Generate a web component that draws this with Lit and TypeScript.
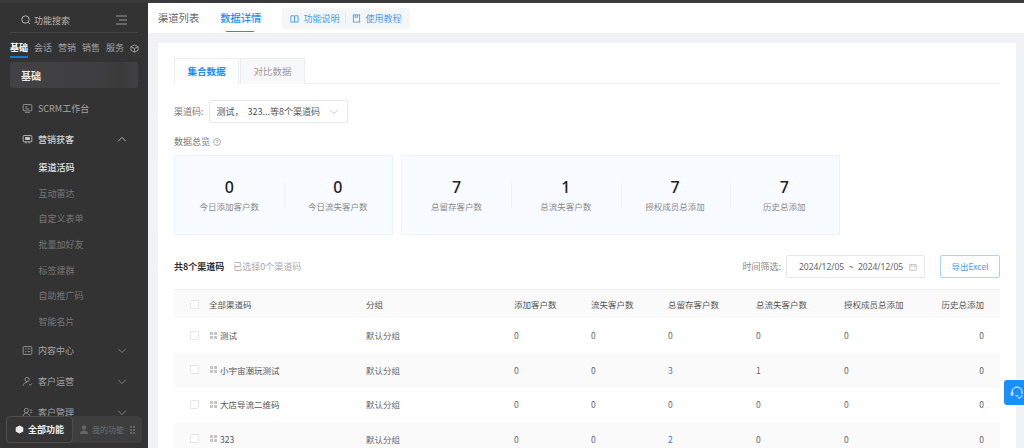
import { LitElement, css, html, svg } from "lit";
import { customElement } from "lit/decorators.js";

const icons: Record<string, unknown> = {
  monitor: svg`<rect x="1.5" y="2" width="11" height="8" rx="1"/><path d="M4 12h6M4 5h3M4 7.5h5"/>`,
  chat: svg`<rect x="1.5" y="2" width="11" height="8" rx="1"/><rect x="4" y="4" width="6" height="3.500" fill="currentColor" stroke="none"/><path d="M5 10v2M9 10v2"/>`,
  list: svg`<rect x="1.5" y="2" width="11" height="10" rx="1"/><path d="M4 5h1.5M4 8.5h1.5M7 5h3.5M7 8.5h3.5"/>`,
  user: svg`<circle cx="6.5" cy="4.5" r="2.7"/><path d="M1.5 12.5c.4-3 2.4-4.6 5-4.6M9 10.5l1.5 1.5 2-2.5"/>`,
  users: svg`<circle cx="5.5" cy="4.5" r="2.7"/><path d="M1 12.5c.4-3 2.2-4.6 4.5-4.6s4 1.6 4.5 4.6M10 4h3M10.500 7h2.500"/>`,
};

const menuIcon = (name: string) => html`<svg class="mi" viewBox="0 0 14 14">${icons[name]}</svg>`;
const chevron = (up = false) =>
  html`<svg class="chev" viewBox="0 0 12 8"><path d=${up ? "M1.500 6L6 1.500 10.500 6" : "M1.500 2L6 6.500 10.500 2"}/></svg>`;

const subItems = ["互动雷达", "自定义表单", "批量加好友", "标签建群", "自助推广码", "智能名片"];

const rows = [
  { name: "测试", v: [0, 0, 0, 0, 0, 0] },
  { name: "小宇宙潮玩测试", v: [0, 0, 3, 1, 0, 0] },
  { name: "大店导流二维码", v: [0, 0, 0, 0, 0, 0] },
  { name: "323", v: [0, 0, 2, 0, 0, 0] },
];

const columns = ["添加客户数", "流失客户数", "总留存客户数", "总流失客户数", "授权成员总添加", "历史总添加"];

@customElement("app-root")
export class AppRoot extends LitElement {
  static styles = css`
    :host {
      display: block;
      width: 1024px;
      height: 448px;
      overflow: hidden;
      background: #f0f2f6;
      color: #555;
      font-family: "Noto Sans CJK SC", "Noto Sans", sans-serif;
      font-size: 8.500px;
    }
    .page { position: relative; display: flex; flex-direction: column; height: 448px; }
    .topline { height: 3px; background: #3a3a3c; flex: none; }
    .body { display: flex; flex: 1; min-height: 0; }

    .side {
      position: relative;
      width: 148px;
      flex: none;
      background: #333;
      color: #a3a3a3;
      box-sizing: border-box;
      overflow: hidden;
    }
    .search {
      display: flex;
      align-items: center;
      height: 30px;
      margin: 0 10px;
      padding: 5px 11px 0;
      box-sizing: border-box;
      border-bottom: 1px solid #454545;
      font-size: 9px;
      color: #b5b5b5;
    }
    .search .glass { width: 10px; height: 10px; margin-right: 3px; fill: none; stroke: #b5b5b5; stroke-width: 1; }
    .search .burger { width: 11px; height: 10px; margin-left: auto; fill: none; stroke: #999; stroke-width: 1; }
    .stabs { display: flex; align-items: center; height: 24px; margin: 3px 0 0 10px; font-size: 9px; gap: 6px; color: #a0a0a0; }
    .stabs span { position: relative; line-height: 24px; }
    .stabs .on { color: #fff; font-weight: 700; }
    .stabs .on::after {
      content: "";
      position: absolute;
      left: 0;
      right: 0;
      bottom: 2px;
      height: 2px;
      background: #1677d2;
    }
    .stabs svg { width: 9px; height: 9px; fill: none; stroke: #a0a0a0; stroke-width: 1; }
    .group {
      display: flex;
      align-items: center;
      height: 26px;
      margin: 2px 10px 5px;
      padding-left: 11px;
      border-radius: 3px;
      background: linear-gradient(90deg, #424244 0%, #3f3f41 70%, #3a3a3a 85%, #424244 100%);
      color: #e8e8e8;
      font-size: 10px;
      font-weight: 700;
    }
    .mrow {
      display: flex;
      align-items: center;
      height: 30px;
      margin-bottom: 1px;
      padding-left: 22px;
      padding-right: 21px;
      font-size: 9px;
    }
    .mrow.open { color: #d2d2d2; font-weight: 500; }
    .mi { width: 11px; height: 11px; margin-right: 5px; fill: none; stroke: currentColor; stroke-width: 1; flex: none; }
    .chev { width: 10px; height: 7px; margin-left: auto; fill: none; stroke: #8d8d8d; stroke-width: 1; }
    .mrow.open .chev { stroke: #ccc; }
    .sub { height: 25.700px; line-height: 25.700px; padding-left: 38.500px; font-size: 9px; color: #777; }
    .sub.on { color: #e6e6e6; font-weight: 500; }
    .subs { margin: 1px 0; }

    .dock {
      position: absolute;
      left: 6px;
      top: 413px;
      width: 136px;
      height: 27px;
      display: flex;
      align-items: center;
      border-radius: 4px;
      background: #3e3e3f;
      font-size: 9px;
      color: #6f6f6f;
    }
    .dock .all {
      display: flex;
      align-items: center;
      justify-content: center;
      gap: 4px;
      width: 67px;
      height: 27px;
      box-sizing: border-box;
      border: 1px solid #4d4d4d;
      border-radius: 4px;
      background: #363636;
      color: #f0f0f0;
      font-weight: 700;
    }
    .dock .all svg { width: 9px; height: 9px; fill: #eee; }
    .dock .mine { display: flex; align-items: center; gap: 4px; margin-left: 7px; font-size: 8px; }
    .dock .mine svg { width: 8px; height: 9px; fill: #666; }
    .dock .mine .dots { width: 5px; height: 8px; margin-left: 2px; fill: #666; }

    .main { flex: 1; min-width: 0; display: flex; flex-direction: column; }
    .top {
      display: flex;
      align-items: center;
      height: 30px;
      flex: none;
      background: #fff;
      padding-left: 10px;
      font-size: 10.300px;
    }
    .top .tab { position: relative; line-height: 30px; color: #666; margin-right: 21px; }
    .top .tab.on { color: #1890ff; font-weight: 500; }
    .top .tab.on::after {
      content: "";
      position: absolute;
      left: 6px;
      right: 7px;
      bottom: 1px;
      height: 1.500px;
      background: #1890ff;
    }
    .help {
      display: flex;
      align-items: center;
      height: 21px;
      margin-left: 0;
      padding: 0 9px 0 8px;
      background: #f5f6f8;
      border-radius: 2px;
      color: #4a9cf0;
      font-size: 9px;
    }
    .help svg { width: 9px; height: 9px; margin-right: 4px; fill: none; stroke: #4a9cf0; stroke-width: 1; }
    .help i { width: 1px; height: 10px; background: #e8eaee; margin: 0 6px; }

    .wrap { flex: 1; min-height: 0; padding: 10px 8px 0 10px; }
    .card { background: #fff; height: 100%; padding: 15px 16px 0; box-sizing: border-box; overflow: hidden; }
    .ctabs { display: flex; height: 26px; border-bottom: 1px solid #ebedf0; box-sizing: border-box; }
    .ctab {
      width: 65px;
      height: 26px;
      box-sizing: border-box;
      margin-right: 1px;
      border: 1px solid #ebedf0;
      border-bottom: 0;
      background: #f7f8fa;
      text-align: center;
      line-height: 25px;
      font-size: 9.500px;
      color: #999;
    }
    .ctab.on { background: #fff; color: #1890ff; font-weight: 700; }
    .filter { display: flex; align-items: center; margin-top: 16px; height: 23px; font-size: 9px; color: #777; }
    .select {
      display: flex;
      align-items: center;
      width: 139px;
      height: 23px;
      margin-left: 5px;
      padding: 0 8px 0 7px;
      box-sizing: border-box;
      border: 1px solid #e8e8e8;
      border-radius: 2px;
      color: #555;
      white-space: pre;
    }
    .select .chev { stroke: #bbb; }
    .overview { display: flex; align-items: center; gap: 3px; margin-top: 11px; height: 15px; font-size: 9px; color: #777; }
    .overview svg { width: 8px; height: 8px; fill: none; stroke: #999; stroke-width: 1; }
    .stats { display: flex; gap: 8px; margin-top: 6px; }
    .box {
      display: flex;
      align-items: center;
      height: 80px;
      box-sizing: border-box;
      background: #f8fbff;
      border: 1px solid #e9f3fd;
    }
    .box.two { width: 219px; }
    .box.four { width: 439px; }
    .stat { position: relative; flex: 1; text-align: center; }
    .stat + .stat::before {
      content: "";
      position: absolute;
      left: 0;
      top: 4px;
      bottom: 4px;
      width: 1px;
      background: #eef1f4;
    }
    .stat b { display: block; font-size: 16px; line-height: 20px; margin-top: -1px; color: #222; font-weight: 500; font-family: "Noto Sans", sans-serif; }
    .stat span { display: block; margin-top: 3px; font-size: 8.500px; line-height: 13px; color: #888; }
    .bar { display: flex; align-items: center; margin-top: 20px; height: 23px; }
    .bar b { font-size: 9px; color: #333; font-weight: 700; }
    .bar .sel { margin-left: 9px; font-size: 9px; color: #aaa; }
    .bar .lbl { margin-left: auto; font-size: 9px; color: #888; }
    .date {
      display: flex;
      align-items: center;
      justify-content: space-between;
      width: 139px;
      height: 23px;
      margin-left: 5px;
      padding: 0 7px 0 12px;
      box-sizing: border-box;
      border: 1px solid #e8e8e8;
      border-radius: 2px;
      font-size: 8.500px;
      color: #666;
      white-space: pre;
      font-family: "Noto Sans", sans-serif;
    }
    .date svg { width: 8px; height: 8px; fill: none; stroke: #bbb; stroke-width: 1; }
    .export {
      width: 60px;
      height: 23px;
      margin-left: 15px;
      box-sizing: border-box;
      border: 1px solid #a8d3fb;
      border-radius: 2px;
      text-align: center;
      line-height: 21px;
      font-size: 8.500px;
      color: #4a9cf0;
    }
    .table { margin-top: 11px; }
    .tr {
      display: grid;
      grid-template-columns: 35px 157px 148px 77px 77px 88px 88px 88px 1fr;
      align-items: center;
      height: 34.500px;
      padding-right: 16px;
      color: #666;
    }
    .tr.head { height: 29px; background: #fafafa; border-top: 1px solid #f2f2f2; box-sizing: border-box; color: #555; }
    .tr:nth-child(odd):not(.head) { background: #fafafa; }
    .tr > :last-child { text-align: right; }
    .check {
      width: 7px;
      height: 7px;
      margin-left: 16px;
      border: 1px solid #e6e6e6;
      border-radius: 1px;
      background: #fff;
    }
    .name { display: flex; align-items: center; gap: 3px; color: #555; }
    .name svg { width: 7px; height: 7px; margin-left: 1px; fill: #c6c6c6; flex: none; }
    .link { color: #3a7cc0; }

    .float {
      position: absolute;
      right: 0;
      top: 380px;
      width: 20px;
      height: 25px;
      background: #1890ff;
      border-radius: 3px 0 0 3px;
      display: flex;
      align-items: center;
      padding-left: 6px;
      box-sizing: border-box;
      overflow: hidden;
    }
    .float svg { width: 16px; height: 16px; fill: none; stroke: #fff; stroke-width: 1; flex: none; }
  `;

  render() {
    return html`
      <div class="page">
        <div class="topline"></div>
        <div class="body">
          ${this.renderSide()}
          <div class="main">
            <div class="top">
              <span class="tab">渠道列表</span>
              <span class="tab on">数据详情</span>
              <div class="help">
                <svg viewBox="0 0 10 10"><path d="M1 2h3.500c.3 0 .5.2.5.500V9H1zM9 2H5.500c-.3 0-.5.2-.5.500V9h4z"/></svg>功能说明<i></i>
                <svg viewBox="0 0 10 10"><rect x="1.500" y="1" width="7" height="8"/><path d="M3.500 1v3l1.200-.8L6 4V1"/></svg>使用教程
              </div>
            </div>
            <div class="wrap">
              <div class="card">
                <div class="ctabs">
                  <div class="ctab on">集合数据</div>
                  <div class="ctab">对比数据</div>
                </div>
                <div class="filter">
                  渠道码:
                  <div class="select">测试，  323...等8个渠道码${chevron()}</div>
                </div>
                <div class="overview">
                  数据总览
                  <svg viewBox="0 0 10 10"><circle cx="5" cy="5" r="4.300"/><path d="M3.700 4a1.300 1.300 0 1 1 1.300 1.500V6.300M5 7.200v.8"/></svg>
                </div>
                <div class="stats">
                  <div class="box two">
                    ${this.stat("0", "今日添加客户数")}${this.stat("0", "今日流失客户数")}
                  </div>
                  <div class="box four">
                    ${this.stat("7", "总留存客户数")}${this.stat("1", "总流失客户数")}${this.stat("7", "授权成员总添加")}${this.stat("7", "历史总添加")}
                  </div>
                </div>
                <div class="bar">
                  <b>共8个渠道码</b>
                  <span class="sel">已选择0个渠道码</span>
                  <span class="lbl">时间筛选:</span>
                  <div class="date">
                    <span>2024/12/05  ~  2024/12/05</span>
                    <svg viewBox="0 0 10 10"><rect x="1" y="2" width="8" height="7"/><path d="M1 4h8M3 1v2M7 1v2"/></svg>
                  </div>
                  <div class="export">导出Excel</div>
                </div>
                <div class="table">
                  <div class="tr head">
                    <div class="check"></div>
                    <div>全部渠道码</div>
                    <div>分组</div>
                    ${columns.map((c) => html`<div>${c}</div>`)}
                  </div>
                  ${rows.map(
                    (r) => html`
                      <div class="tr">
                        <div class="check"></div>
                        <div class="name">
                          <svg viewBox="0 0 7 7"><path d="M0 0h3v3H0zM4 0h3v3H4zM0 4h3v3H0zM4 4h3v3H4z"/></svg>${r.name}
                        </div>
                        <div>默认分组</div>
                        ${r.v.map((v, i) => html`<div class=${i === 2 && v > 0 ? "link" : ""}>${v}</div>`)}
                      </div>
                    `
                  )}
                </div>
              </div>
            </div>
          </div>
        </div>
        <div class="float">
          <svg viewBox="0 0 16 16"><path d="M2 9V7a5 5 0 0 1 10 0v2"/><rect x="1" y="7.500" width="2" height="3" rx="1"/><path d="M12 10c0 2-1.500 3-4 3M5.500 10.500c1 .8 2 .8 3 0"/></svg>
        </div>
      </div>
    `;
  }

  stat(value: string, label: string) {
    return html`<div class="stat"><b>${value}</b><span>${label}</span></div>`;
  }

  renderSide() {
    return html`
      <aside class="side">
        <div class="search">
          <svg class="glass" viewBox="0 0 10 10"><circle cx="4.500" cy="4.500" r="3.700"/><path d="M7.300 7.300L9 9"/></svg>
          功能搜索
          <svg class="burger" viewBox="0 0 11 10"><path d="M0 1h11M3 5h8M0 9h11"/></svg>
        </div>
        <div class="stabs">
          <span class="on">基础</span><span>会话</span><span>营销</span><span>销售</span><span>服务</span>
          <svg viewBox="0 0 10 10"><path d="M5 1l4 2v4L5 9 1 7V3zM1 3l4 2 4-2M5 5v4"/></svg>
        </div>
        <div class="group">基础</div>
        <div class="mrow">${menuIcon("monitor")}SCRM工作台</div>
        <div class="mrow open">${menuIcon("chat")}营销获客${chevron(true)}</div>
        <div class="subs">
          <div class="sub on">渠道活码</div>
          ${subItems.map((s) => html`<div class="sub">${s}</div>`)}
        </div>
        <div class="mrow">${menuIcon("list")}内容中心${chevron()}</div>
        <div class="mrow">${menuIcon("user")}客户运营${chevron()}</div>
        <div class="mrow">${menuIcon("users")}客户管理${chevron()}</div>
        <div class="dock">
          <div class="all">
            <svg viewBox="0 0 10 10"><path d="M5 .5l4.200 2.300v4.400L5 9.500.8 7.200V2.800z"/></svg>全部功能
          </div>
          <div class="mine">
            <svg viewBox="0 0 8 9"><circle cx="4" cy="2.500" r="2.200"/><path d="M0 9c0-2.500 1.500-3.500 4-3.500S8 6.500 8 9z"/></svg>我的功能
            <svg class="dots" viewBox="0 0 5 8"><path d="M0 0h2v2H0zM3 0h2v2H3zM0 3h2v2H0zM3 3h2v2H3zM0 6h2v2H0zM3 6h2v2H3z"/></svg>
          </div>
        </div>
      </aside>
    `;
  }
}
